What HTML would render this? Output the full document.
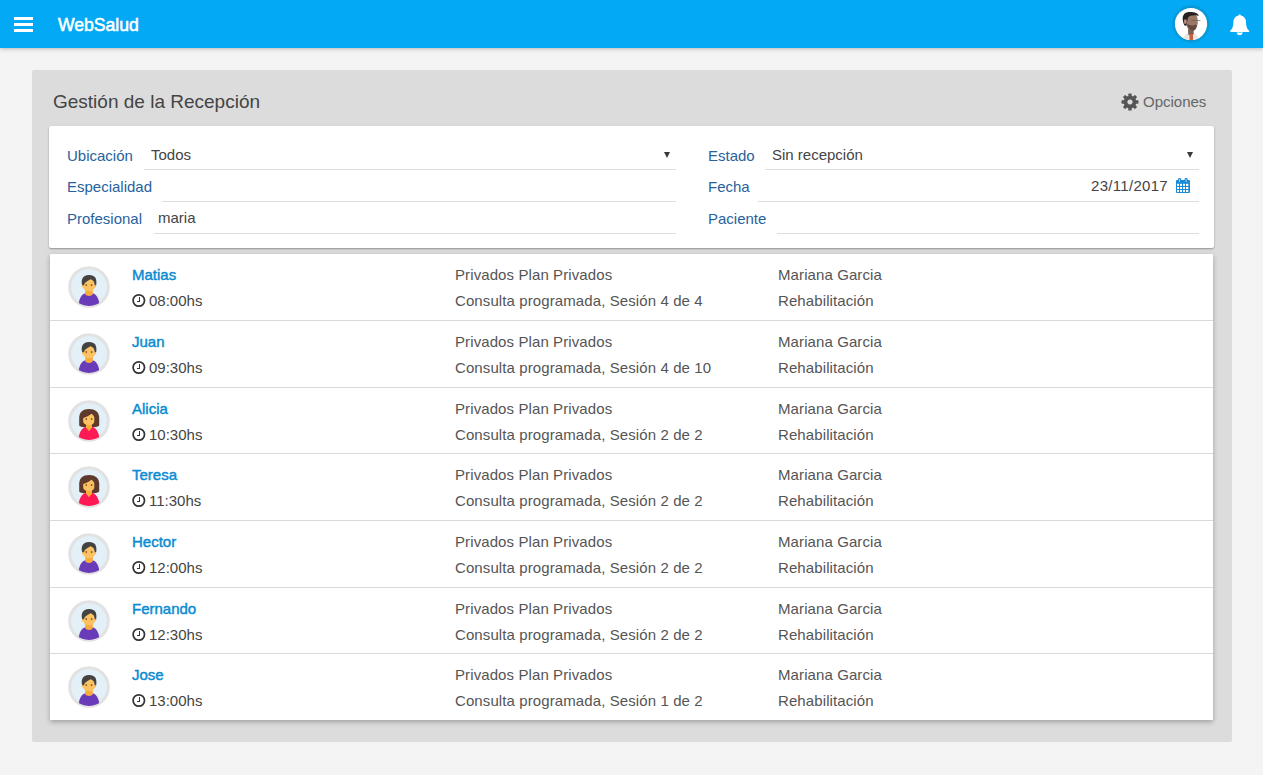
<!DOCTYPE html>
<html><head><meta charset="utf-8"><title>WebSalud</title>
<style>
*{box-sizing:border-box;margin:0;padding:0}
html,body{width:1263px;height:775px;overflow:hidden;background:#f4f4f4;font-family:"Liberation Sans",sans-serif;position:relative}
.hdr{position:absolute;left:0;top:0;width:1263px;height:48px;background:#03a9f4;box-shadow:0 1px 4px rgba(0,0,0,.25);z-index:2}
.bar{position:absolute;left:14px;width:19px;height:3px;background:#fff}
.brand{position:absolute;left:58px;top:13px;font-size:19px;color:#fff;-webkit-text-stroke:0.6px #fff;line-height:24px;transform:scaleX(0.925);transform-origin:left center}
.panel{position:absolute;left:32px;top:70px;width:1200px;height:672px;background:#dcdcdc;border-radius:2px}
.title{position:absolute;left:53px;top:90px;font-size:19px;color:#444;line-height:24px;white-space:nowrap}
.opc{position:absolute;left:1143px;top:92px;font-size:15px;color:#666;line-height:20px}
.card{position:absolute;left:49px;top:126px;width:1165px;height:122px;background:#fff;border-radius:2px;box-shadow:0 1px 2px rgba(0,0,0,.35)}
.lbl{position:absolute;font-size:15px;color:#28629c;line-height:20px;white-space:nowrap}
.val{position:absolute;font-size:15px;color:#444;line-height:20px;white-space:nowrap}
.ul{position:absolute;height:1px;background:#dedede}
.arr{position:absolute;width:0;height:0;border-left:3px solid transparent;border-right:3px solid transparent;border-top:6px solid #3a3a3a}
.list{position:absolute;left:50px;top:254px;width:1163px;height:466px;background:#fff;box-shadow:0 2px 5px 0 rgba(0,0,0,.28)}
.row{position:absolute;left:50px;width:1163px;height:66px}
.sep{position:absolute;left:50px;width:1163px;height:1px;background:#dadada}
.t{position:absolute;font-size:15px;line-height:20px;white-space:nowrap}
.name{color:#0a8bd2;-webkit-text-stroke:0.45px #0a8bd2}
.time{color:#444}
.mid{color:#555;letter-spacing:0.1px}
.av{display:block}
.clk{display:block}
</style></head><body>
<div class="hdr">
<div class="bar" style="top:17px"></div><div class="bar" style="top:23px"></div><div class="bar" style="top:29px"></div>
<div class="brand">WebSalud</div>
<div style="position:absolute;left:1172px;top:5px"><svg width="38" height="38" viewBox="0 0 38 38"><defs><clipPath id="pc"><circle cx="19" cy="19" r="16"/></clipPath><radialGradient id="rg" cx="50%" cy="50%" r="50%"><stop offset="84%" stop-color="#0a9ad8"/><stop offset="100%" stop-color="#05a4ec"/></radialGradient></defs>
<circle cx="19" cy="19" r="18.9" fill="#06a0e4"/><circle cx="19" cy="19" r="18.2" fill="#0a97d5"/><circle cx="19" cy="19" r="16.1" fill="#fff"/>
<g clip-path="url(#pc)">
<path d="M9,38 C10.5,32 13,29.5 16,28.5 L22,28.5 C25,29.5 27,33 28,38 Z" fill="#e9e6e2"/>
<path d="M16,24 L21.5,24 L21.8,29 L19,31 L16.2,29.5 Z" fill="#7a6050"/>
<path d="M17.6,29 L20.8,29 L21.4,38 L17.4,38 Z" fill="#c55e3c"/>
<path d="M14.3,12 C14.3,9 16.5,8.5 20,8.8 C23.5,9 25.6,11 25.6,14 L25.8,18.5 L25,21 C24.2,24.5 22.5,25.8 20,25.8 C17,25.8 15.2,23 14.5,20 Z" fill="#9c7867"/>
<path d="M15,19 C16,22 17.5,25.5 20.5,25.8 C23,25.6 24.5,23 25,20.5 L23.5,19.5 C21,21 18,20.5 15,19 Z" fill="#5f4a40"/>
<path d="M10.7,14 C10.5,9.5 13,6.9 18,6.9 C22.5,6.9 26.5,8 26.7,11 C25,10 21,10.2 18.5,10.8 C17,11.2 16,12.5 15.5,14.3 L14.5,20.8 L12.5,20.5 C11.5,18.5 10.8,16.5 10.7,14 Z" fill="#272220"/>
<ellipse cx="13.3" cy="16.7" rx="1.5" ry="2.4" fill="#b5897a"/>
<path d="M19.1,15.3 L28.4,15.6" stroke="#6b5e58" stroke-width="0.7"/>
</g></svg></div>
<div style="position:absolute;left:1229px;top:13px"><svg width="22" height="24" viewBox="0 0 22 24"><path fill="#fff" d="M10.7,1.4 C9.9,1.4 9.5,1.9 9.5,2.5 C6.4,3.1 4.4,5.6 4.4,8.6 C4.4,13.5 3.4,16 1.2,17.8 L1.2,18.9 L20.2,18.9 L20.2,17.8 C18,16 17,13.5 17,8.6 C17,5.6 15,3.1 11.9,2.5 C11.9,1.9 11.5,1.4 10.7,1.4 Z M7.6,19.4 C7.8,21 9.1,22 10.7,22 C12.3,22 13.6,21 13.8,19.4 Z"/></svg></div>
</div>
<div class="panel"></div>
<div class="title">Gestión de la Recepción</div>
<div style="position:absolute;left:1121px;top:93px"><svg width="18" height="18" viewBox="0 0 18 18"><g fill="#555"><g transform="translate(9,9)"><rect x="-1.7" y="-8.5" width="3.4" height="4" rx="0.6" transform="rotate(0)"/><rect x="-1.7" y="-8.5" width="3.4" height="4" rx="0.6" transform="rotate(45)"/><rect x="-1.7" y="-8.5" width="3.4" height="4" rx="0.6" transform="rotate(90)"/><rect x="-1.7" y="-8.5" width="3.4" height="4" rx="0.6" transform="rotate(135)"/><rect x="-1.7" y="-8.5" width="3.4" height="4" rx="0.6" transform="rotate(180)"/><rect x="-1.7" y="-8.5" width="3.4" height="4" rx="0.6" transform="rotate(225)"/><rect x="-1.7" y="-8.5" width="3.4" height="4" rx="0.6" transform="rotate(270)"/><rect x="-1.7" y="-8.5" width="3.4" height="4" rx="0.6" transform="rotate(315)"/></g><path fill-rule="evenodd" d="M9,2.7 A6.3,6.3 0 1 1 8.99,2.7 Z M9,6.4 A2.6,2.6 0 1 0 9.01,6.4 Z"/></g></svg></div>
<div class="opc">Opciones</div>
<div class="card"></div>
<div class="lbl" style="left:67px;top:146px">Ubicación</div>
<div class="val" style="left:151px;top:145px">Todos</div>
<div class="arr" style="left:664px;top:152px"></div>
<div class="ul" style="left:144px;top:169px;width:532px"></div>
<div class="lbl" style="left:67px;top:177px">Especialidad</div>
<div class="ul" style="left:162px;top:201px;width:514px"></div>
<div class="lbl" style="left:67px;top:209px">Profesional</div>
<div class="val" style="left:158px;top:208px">maria</div>
<div class="ul" style="left:154px;top:233px;width:522px"></div>
<div class="lbl" style="left:708px;top:146px">Estado</div>
<div class="val" style="left:772px;top:145px">Sin recepción</div>
<div class="arr" style="left:1187px;top:152px"></div>
<div class="ul" style="left:765px;top:169px;width:434px"></div>
<div class="lbl" style="left:708px;top:177px">Fecha</div>
<div class="val" style="left:1091px;top:176px;letter-spacing:0.3px">23/11/2017</div>
<div style="position:absolute;left:1172px;top:175px"><svg width="22" height="22" viewBox="0 0 22 22"><g fill="#1a8ad6"><rect x="4" y="5" width="14" height="13" rx="1"/><rect x="6.1" y="3" width="3" height="4.2" rx="1.2"/><rect x="12.6" y="3" width="3" height="4.2" rx="1.2"/></g><rect x="7.2" y="4" width="0.8" height="3" fill="#bfe0f5"/><rect x="13.7" y="4" width="0.8" height="3" fill="#bfe0f5"/><rect x="5" y="8.8" width="2" height="2.1" fill="#fff"/><rect x="8" y="8.8" width="2" height="2.1" fill="#fff"/><rect x="11" y="8.8" width="2" height="2.1" fill="#fff"/><rect x="14" y="8.8" width="2.3" height="2.1" fill="#fff"/><rect x="5" y="12" width="2" height="2" fill="#fff"/><rect x="8" y="12" width="2" height="2" fill="#fff"/><rect x="11" y="12" width="2" height="2" fill="#fff"/><rect x="14" y="12" width="2.3" height="2" fill="#fff"/><rect x="5" y="15" width="2" height="1.9" fill="#fff"/><rect x="8" y="15" width="2" height="1.9" fill="#fff"/><rect x="11" y="15" width="2" height="1.9" fill="#fff"/><rect x="14" y="15" width="2.3" height="1.9" fill="#fff"/></svg></div>
<div class="ul" style="left:758px;top:201px;width:441px"></div>
<div class="lbl" style="left:708px;top:209px">Paciente</div>
<div class="ul" style="left:777px;top:233px;width:422px"></div>
<div class="list"></div>
<div class="sep" style="top:320px"></div><div class="sep" style="top:387px"></div><div class="sep" style="top:453px"></div><div class="sep" style="top:520px"></div><div class="sep" style="top:587px"></div><div class="sep" style="top:653px"></div>
<div class="row" style="top:254px">
<div style="position:absolute;left:16px;top:10px"><svg class="av" width="46" height="46" viewBox="0 0 46 46"><defs><clipPath id="c0"><circle cx="23" cy="23" r="19"/></clipPath></defs>
<circle cx="23" cy="23" r="19.3" fill="#e3f0f8" stroke="#e2e2e2" stroke-width="3"/>
<g clip-path="url(#c0)">
<path d="M12.6,42 C12.8,34.5 15.5,30.2 19.5,29.2 L26.5,29.2 C30.5,30.2 33.2,34.5 33.4,42 Z" fill="#6a3bb8"/>
<path d="M19.2,24 L26.8,24 L26.8,30 C26,32.6 20,32.6 19.2,30 Z" fill="#f8ad3a"/>
<path d="M17.2,15 L28.8,15 L28.8,22.5 C28.8,25.8 26.3,27 23,27 C19.7,27 17.2,25.8 17.2,22.5 Z" fill="#fcc262"/>
<circle cx="17.1" cy="22.2" r="1.2" fill="#fcc262"/><circle cx="28.9" cy="22.2" r="1.2" fill="#fcc262"/>
<path d="M16.2,21.3 C15,17 15.6,11 23.2,11 C29,11 31.3,14.5 30.2,21.3 L28.7,21.3 C28.6,18.8 28,16.5 24.6,15.2 C22,16.6 19.8,17.8 18.8,19 L17.9,21.3 Z" fill="#434343"/>
<ellipse cx="20.3" cy="21.1" rx="0.85" ry="1.1" fill="#8a5a2a"/><ellipse cx="25.6" cy="21.1" rx="0.85" ry="1.1" fill="#8a5a2a"/>
</g></svg></div>
<div class="t name" style="left:82px;top:11px">Matias</div>
<div style="position:absolute;left:82px;top:39px"><svg class="clk" width="14" height="15" viewBox="0 0 14 15"><circle cx="6.8" cy="7.5" r="5.7" fill="none" stroke="#333" stroke-width="1.7"/><rect x="7" y="4" width="1" height="5" fill="#333"/><rect x="5" y="8" width="3" height="1" fill="#333"/></svg></div>
<div class="t time" style="left:99px;top:37px">08:00hs</div>
<div class="t mid" style="left:405px;top:11px">Privados Plan Privados</div>
<div class="t mid" style="left:405px;top:37px">Consulta programada, Sesión 4 de 4</div>
<div class="t mid" style="left:728px;top:11px">Mariana Garcia</div>
<div class="t mid" style="left:728px;top:37px">Rehabilitación</div>
</div><div class="row" style="top:321px">
<div style="position:absolute;left:16px;top:10px"><svg class="av" width="46" height="46" viewBox="0 0 46 46"><defs><clipPath id="c1"><circle cx="23" cy="23" r="19"/></clipPath></defs>
<circle cx="23" cy="23" r="19.3" fill="#e3f0f8" stroke="#e2e2e2" stroke-width="3"/>
<g clip-path="url(#c1)">
<path d="M12.6,42 C12.8,34.5 15.5,30.2 19.5,29.2 L26.5,29.2 C30.5,30.2 33.2,34.5 33.4,42 Z" fill="#6a3bb8"/>
<path d="M19.2,24 L26.8,24 L26.8,30 C26,32.6 20,32.6 19.2,30 Z" fill="#f8ad3a"/>
<path d="M17.2,15 L28.8,15 L28.8,22.5 C28.8,25.8 26.3,27 23,27 C19.7,27 17.2,25.8 17.2,22.5 Z" fill="#fcc262"/>
<circle cx="17.1" cy="22.2" r="1.2" fill="#fcc262"/><circle cx="28.9" cy="22.2" r="1.2" fill="#fcc262"/>
<path d="M16.2,21.3 C15,17 15.6,11 23.2,11 C29,11 31.3,14.5 30.2,21.3 L28.7,21.3 C28.6,18.8 28,16.5 24.6,15.2 C22,16.6 19.8,17.8 18.8,19 L17.9,21.3 Z" fill="#434343"/>
<ellipse cx="20.3" cy="21.1" rx="0.85" ry="1.1" fill="#8a5a2a"/><ellipse cx="25.6" cy="21.1" rx="0.85" ry="1.1" fill="#8a5a2a"/>
</g></svg></div>
<div class="t name" style="left:82px;top:11px">Juan</div>
<div style="position:absolute;left:82px;top:39px"><svg class="clk" width="14" height="15" viewBox="0 0 14 15"><circle cx="6.8" cy="7.5" r="5.7" fill="none" stroke="#333" stroke-width="1.7"/><rect x="7" y="4" width="1" height="5" fill="#333"/><rect x="5" y="8" width="3" height="1" fill="#333"/></svg></div>
<div class="t time" style="left:99px;top:37px">09:30hs</div>
<div class="t mid" style="left:405px;top:11px">Privados Plan Privados</div>
<div class="t mid" style="left:405px;top:37px">Consulta programada, Sesión 4 de 10</div>
<div class="t mid" style="left:728px;top:11px">Mariana Garcia</div>
<div class="t mid" style="left:728px;top:37px">Rehabilitación</div>
</div><div class="row" style="top:388px">
<div style="position:absolute;left:16px;top:10px"><svg class="av" width="46" height="46" viewBox="0 0 46 46"><defs><clipPath id="c2"><circle cx="23" cy="23" r="19"/></clipPath></defs>
<circle cx="23" cy="23" r="19.3" fill="#e3f0f8" stroke="#e2e2e2" stroke-width="3"/>
<g clip-path="url(#c2)">
<path d="M13.2,20 C13.2,14 17,11 23,11 C29,11 33.2,14 33.2,20 L33.2,27.5 C32,28.8 30,29.2 28,29.2 L18,29.2 C16,29 14,28.5 13.2,27.5 Z" fill="#5d3a2c"/>
<path d="M12.6,42 C12.8,34.5 15.5,30.2 19.5,29 L26.5,29 C30.5,30.2 33.2,34.5 33.4,42 Z" fill="#ff1a56"/>
<path d="M20,25 L26,25 L26,29.5 L23,33.2 L20,29.5 Z" fill="#f8ad3a"/>
<path d="M17.2,20.1 C20,19 23.5,17.5 25.4,15.7 C26.8,16.8 28.2,18 28.3,19.4 L28.3,23 C28.3,25.8 26,26.9 22.8,26.9 C19.6,26.9 17.2,25.8 17.2,23 Z" fill="#fcc262"/>
<ellipse cx="20.3" cy="21.1" rx="0.85" ry="1.1" fill="#8a5a2a"/><ellipse cx="25.6" cy="21.1" rx="0.85" ry="1.1" fill="#8a5a2a"/>
</g></svg></div>
<div class="t name" style="left:82px;top:11px">Alicia</div>
<div style="position:absolute;left:82px;top:39px"><svg class="clk" width="14" height="15" viewBox="0 0 14 15"><circle cx="6.8" cy="7.5" r="5.7" fill="none" stroke="#333" stroke-width="1.7"/><rect x="7" y="4" width="1" height="5" fill="#333"/><rect x="5" y="8" width="3" height="1" fill="#333"/></svg></div>
<div class="t time" style="left:99px;top:37px">10:30hs</div>
<div class="t mid" style="left:405px;top:11px">Privados Plan Privados</div>
<div class="t mid" style="left:405px;top:37px">Consulta programada, Sesión 2 de 2</div>
<div class="t mid" style="left:728px;top:11px">Mariana Garcia</div>
<div class="t mid" style="left:728px;top:37px">Rehabilitación</div>
</div><div class="row" style="top:454px">
<div style="position:absolute;left:16px;top:10px"><svg class="av" width="46" height="46" viewBox="0 0 46 46"><defs><clipPath id="c3"><circle cx="23" cy="23" r="19"/></clipPath></defs>
<circle cx="23" cy="23" r="19.3" fill="#e3f0f8" stroke="#e2e2e2" stroke-width="3"/>
<g clip-path="url(#c3)">
<path d="M13.2,20 C13.2,14 17,11 23,11 C29,11 33.2,14 33.2,20 L33.2,27.5 C32,28.8 30,29.2 28,29.2 L18,29.2 C16,29 14,28.5 13.2,27.5 Z" fill="#5d3a2c"/>
<path d="M12.6,42 C12.8,34.5 15.5,30.2 19.5,29 L26.5,29 C30.5,30.2 33.2,34.5 33.4,42 Z" fill="#ff1a56"/>
<path d="M20,25 L26,25 L26,29.5 L23,33.2 L20,29.5 Z" fill="#f8ad3a"/>
<path d="M17.2,20.1 C20,19 23.5,17.5 25.4,15.7 C26.8,16.8 28.2,18 28.3,19.4 L28.3,23 C28.3,25.8 26,26.9 22.8,26.9 C19.6,26.9 17.2,25.8 17.2,23 Z" fill="#fcc262"/>
<ellipse cx="20.3" cy="21.1" rx="0.85" ry="1.1" fill="#8a5a2a"/><ellipse cx="25.6" cy="21.1" rx="0.85" ry="1.1" fill="#8a5a2a"/>
</g></svg></div>
<div class="t name" style="left:82px;top:11px">Teresa</div>
<div style="position:absolute;left:82px;top:39px"><svg class="clk" width="14" height="15" viewBox="0 0 14 15"><circle cx="6.8" cy="7.5" r="5.7" fill="none" stroke="#333" stroke-width="1.7"/><rect x="7" y="4" width="1" height="5" fill="#333"/><rect x="5" y="8" width="3" height="1" fill="#333"/></svg></div>
<div class="t time" style="left:99px;top:37px">11:30hs</div>
<div class="t mid" style="left:405px;top:11px">Privados Plan Privados</div>
<div class="t mid" style="left:405px;top:37px">Consulta programada, Sesión 2 de 2</div>
<div class="t mid" style="left:728px;top:11px">Mariana Garcia</div>
<div class="t mid" style="left:728px;top:37px">Rehabilitación</div>
</div><div class="row" style="top:521px">
<div style="position:absolute;left:16px;top:10px"><svg class="av" width="46" height="46" viewBox="0 0 46 46"><defs><clipPath id="c4"><circle cx="23" cy="23" r="19"/></clipPath></defs>
<circle cx="23" cy="23" r="19.3" fill="#e3f0f8" stroke="#e2e2e2" stroke-width="3"/>
<g clip-path="url(#c4)">
<path d="M12.6,42 C12.8,34.5 15.5,30.2 19.5,29.2 L26.5,29.2 C30.5,30.2 33.2,34.5 33.4,42 Z" fill="#6a3bb8"/>
<path d="M19.2,24 L26.8,24 L26.8,30 C26,32.6 20,32.6 19.2,30 Z" fill="#f8ad3a"/>
<path d="M17.2,15 L28.8,15 L28.8,22.5 C28.8,25.8 26.3,27 23,27 C19.7,27 17.2,25.8 17.2,22.5 Z" fill="#fcc262"/>
<circle cx="17.1" cy="22.2" r="1.2" fill="#fcc262"/><circle cx="28.9" cy="22.2" r="1.2" fill="#fcc262"/>
<path d="M16.2,21.3 C15,17 15.6,11 23.2,11 C29,11 31.3,14.5 30.2,21.3 L28.7,21.3 C28.6,18.8 28,16.5 24.6,15.2 C22,16.6 19.8,17.8 18.8,19 L17.9,21.3 Z" fill="#434343"/>
<ellipse cx="20.3" cy="21.1" rx="0.85" ry="1.1" fill="#8a5a2a"/><ellipse cx="25.6" cy="21.1" rx="0.85" ry="1.1" fill="#8a5a2a"/>
</g></svg></div>
<div class="t name" style="left:82px;top:11px">Hector</div>
<div style="position:absolute;left:82px;top:39px"><svg class="clk" width="14" height="15" viewBox="0 0 14 15"><circle cx="6.8" cy="7.5" r="5.7" fill="none" stroke="#333" stroke-width="1.7"/><rect x="7" y="4" width="1" height="5" fill="#333"/><rect x="5" y="8" width="3" height="1" fill="#333"/></svg></div>
<div class="t time" style="left:99px;top:37px">12:00hs</div>
<div class="t mid" style="left:405px;top:11px">Privados Plan Privados</div>
<div class="t mid" style="left:405px;top:37px">Consulta programada, Sesión 2 de 2</div>
<div class="t mid" style="left:728px;top:11px">Mariana Garcia</div>
<div class="t mid" style="left:728px;top:37px">Rehabilitación</div>
</div><div class="row" style="top:588px">
<div style="position:absolute;left:16px;top:10px"><svg class="av" width="46" height="46" viewBox="0 0 46 46"><defs><clipPath id="c5"><circle cx="23" cy="23" r="19"/></clipPath></defs>
<circle cx="23" cy="23" r="19.3" fill="#e3f0f8" stroke="#e2e2e2" stroke-width="3"/>
<g clip-path="url(#c5)">
<path d="M12.6,42 C12.8,34.5 15.5,30.2 19.5,29.2 L26.5,29.2 C30.5,30.2 33.2,34.5 33.4,42 Z" fill="#6a3bb8"/>
<path d="M19.2,24 L26.8,24 L26.8,30 C26,32.6 20,32.6 19.2,30 Z" fill="#f8ad3a"/>
<path d="M17.2,15 L28.8,15 L28.8,22.5 C28.8,25.8 26.3,27 23,27 C19.7,27 17.2,25.8 17.2,22.5 Z" fill="#fcc262"/>
<circle cx="17.1" cy="22.2" r="1.2" fill="#fcc262"/><circle cx="28.9" cy="22.2" r="1.2" fill="#fcc262"/>
<path d="M16.2,21.3 C15,17 15.6,11 23.2,11 C29,11 31.3,14.5 30.2,21.3 L28.7,21.3 C28.6,18.8 28,16.5 24.6,15.2 C22,16.6 19.8,17.8 18.8,19 L17.9,21.3 Z" fill="#434343"/>
<ellipse cx="20.3" cy="21.1" rx="0.85" ry="1.1" fill="#8a5a2a"/><ellipse cx="25.6" cy="21.1" rx="0.85" ry="1.1" fill="#8a5a2a"/>
</g></svg></div>
<div class="t name" style="left:82px;top:11px">Fernando</div>
<div style="position:absolute;left:82px;top:39px"><svg class="clk" width="14" height="15" viewBox="0 0 14 15"><circle cx="6.8" cy="7.5" r="5.7" fill="none" stroke="#333" stroke-width="1.7"/><rect x="7" y="4" width="1" height="5" fill="#333"/><rect x="5" y="8" width="3" height="1" fill="#333"/></svg></div>
<div class="t time" style="left:99px;top:37px">12:30hs</div>
<div class="t mid" style="left:405px;top:11px">Privados Plan Privados</div>
<div class="t mid" style="left:405px;top:37px">Consulta programada, Sesión 2 de 2</div>
<div class="t mid" style="left:728px;top:11px">Mariana Garcia</div>
<div class="t mid" style="left:728px;top:37px">Rehabilitación</div>
</div><div class="row" style="top:654px">
<div style="position:absolute;left:16px;top:10px"><svg class="av" width="46" height="46" viewBox="0 0 46 46"><defs><clipPath id="c6"><circle cx="23" cy="23" r="19"/></clipPath></defs>
<circle cx="23" cy="23" r="19.3" fill="#e3f0f8" stroke="#e2e2e2" stroke-width="3"/>
<g clip-path="url(#c6)">
<path d="M12.6,42 C12.8,34.5 15.5,30.2 19.5,29.2 L26.5,29.2 C30.5,30.2 33.2,34.5 33.4,42 Z" fill="#6a3bb8"/>
<path d="M19.2,24 L26.8,24 L26.8,30 C26,32.6 20,32.6 19.2,30 Z" fill="#f8ad3a"/>
<path d="M17.2,15 L28.8,15 L28.8,22.5 C28.8,25.8 26.3,27 23,27 C19.7,27 17.2,25.8 17.2,22.5 Z" fill="#fcc262"/>
<circle cx="17.1" cy="22.2" r="1.2" fill="#fcc262"/><circle cx="28.9" cy="22.2" r="1.2" fill="#fcc262"/>
<path d="M16.2,21.3 C15,17 15.6,11 23.2,11 C29,11 31.3,14.5 30.2,21.3 L28.7,21.3 C28.6,18.8 28,16.5 24.6,15.2 C22,16.6 19.8,17.8 18.8,19 L17.9,21.3 Z" fill="#434343"/>
<ellipse cx="20.3" cy="21.1" rx="0.85" ry="1.1" fill="#8a5a2a"/><ellipse cx="25.6" cy="21.1" rx="0.85" ry="1.1" fill="#8a5a2a"/>
</g></svg></div>
<div class="t name" style="left:82px;top:11px">Jose</div>
<div style="position:absolute;left:82px;top:39px"><svg class="clk" width="14" height="15" viewBox="0 0 14 15"><circle cx="6.8" cy="7.5" r="5.7" fill="none" stroke="#333" stroke-width="1.7"/><rect x="7" y="4" width="1" height="5" fill="#333"/><rect x="5" y="8" width="3" height="1" fill="#333"/></svg></div>
<div class="t time" style="left:99px;top:37px">13:00hs</div>
<div class="t mid" style="left:405px;top:11px">Privados Plan Privados</div>
<div class="t mid" style="left:405px;top:37px">Consulta programada, Sesión 1 de 2</div>
<div class="t mid" style="left:728px;top:11px">Mariana Garcia</div>
<div class="t mid" style="left:728px;top:37px">Rehabilitación</div>
</div>
</body></html>
